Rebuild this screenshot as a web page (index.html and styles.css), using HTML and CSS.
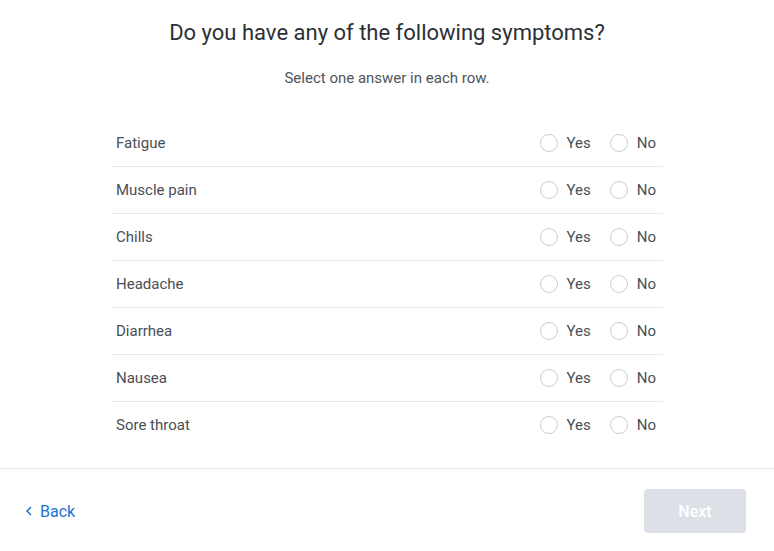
FILE: index.html
```html
<!DOCTYPE html>
<html lang="en">
<head>
    <meta charset="UTF-8">
    <meta name="viewport" content="width=device-width, initial-scale=1.0">
    <title>Symptoms</title>
    <link rel="stylesheet" href="styles.css">
</head>
<body>
    <main class="survey">
        <h1 class="title">Do you have any of the following symptoms?</h1>
        <p class="hint">Select one answer in each row.</p>

        <ul class="symptoms">
            <li class="row">
                <span class="label">Fatigue</span>
                <div class="choices">
                    <label class="choice"><input type="radio" name="fatigue"><span class="dot"></span>Yes</label>
                    <label class="choice"><input type="radio" name="fatigue"><span class="dot"></span>No</label>
                </div>
            </li>
            <li class="row">
                <span class="label">Muscle pain</span>
                <div class="choices">
                    <label class="choice"><input type="radio" name="muscle"><span class="dot"></span>Yes</label>
                    <label class="choice"><input type="radio" name="muscle"><span class="dot"></span>No</label>
                </div>
            </li>
            <li class="row">
                <span class="label">Chills</span>
                <div class="choices">
                    <label class="choice"><input type="radio" name="chills"><span class="dot"></span>Yes</label>
                    <label class="choice"><input type="radio" name="chills"><span class="dot"></span>No</label>
                </div>
            </li>
            <li class="row">
                <span class="label">Headache</span>
                <div class="choices">
                    <label class="choice"><input type="radio" name="headache"><span class="dot"></span>Yes</label>
                    <label class="choice"><input type="radio" name="headache"><span class="dot"></span>No</label>
                </div>
            </li>
            <li class="row">
                <span class="label">Diarrhea</span>
                <div class="choices">
                    <label class="choice"><input type="radio" name="diarrhea"><span class="dot"></span>Yes</label>
                    <label class="choice"><input type="radio" name="diarrhea"><span class="dot"></span>No</label>
                </div>
            </li>
            <li class="row">
                <span class="label">Nausea</span>
                <div class="choices">
                    <label class="choice"><input type="radio" name="nausea"><span class="dot"></span>Yes</label>
                    <label class="choice"><input type="radio" name="nausea"><span class="dot"></span>No</label>
                </div>
            </li>
            <li class="row">
                <span class="label">Sore throat</span>
                <div class="choices">
                    <label class="choice"><input type="radio" name="throat"><span class="dot"></span>Yes</label>
                    <label class="choice"><input type="radio" name="throat"><span class="dot"></span>No</label>
                </div>
            </li>
        </ul>
    </main>

    <footer class="actions">
        <a class="back" href="#">
            <svg width="8" height="10" viewBox="0 0 8 10"><path d="M6 1 2 5l4 4" fill="none" stroke="currentColor" stroke-width="1.5"/></svg>
            Back
        </a>
        <button class="next" disabled>Next</button>
    </footer>
</body>
</html>
```

FILE: styles.css
```css
body {
    font-family: Roboto, "Liberation Sans", sans-serif;
    margin: 0;
    padding: 0;
    background-color: #fff;
    color: #4a4f54;
}

.survey {
    width: 552px;
    margin: 0 auto;
    padding-top: 20px;
    padding-bottom: 20px;
}

.title {
    margin: 0;
    font-size: 22px;
    font-weight: 400;
    line-height: 26px;
    text-align: center;
    color: #2b3034;
}

.hint {
    margin: 24px 0 0;
    font-size: 15px;
    line-height: 16px;
    text-align: center;
    color: #505559;
}

.symptoms {
    list-style: none;
    margin: 34px 0 0;
    padding: 0;
}

.row {
    display: flex;
    align-items: center;
    justify-content: space-between;
    height: 46px;
    padding: 0 7px 0 5px;
    border-bottom: 1px solid #e8e9eb;
    font-size: 15px;
}

.row:last-child {
    border-bottom: none;
}

.choices {
    display: flex;
    gap: 19px;
}

.choice {
    display: flex;
    align-items: center;
    gap: 9px;
    cursor: pointer;
}

.choice input {
    display: none;
}

.dot {
    width: 16px;
    height: 16px;
    border: 1px solid #c9ccd0;
    border-radius: 50%;
}

.choice input:checked + .dot {
    border: 5px solid #1b75d0;
    width: 8px;
    height: 8px;
}

.actions {
    display: flex;
    align-items: center;
    justify-content: space-between;
    border-top: 1px solid #e6e7e9;
    padding: 20px 28px 18px 25px;
}

.back {
    display: flex;
    align-items: center;
    gap: 7px;
    color: #1a73d1;
    text-decoration: none;
    font-size: 16px;
}

.next {
    width: 102px;
    height: 44px;
    border: none;
    border-radius: 4px;
    background-color: #dde1e7;
    color: #fff;
    font-family: inherit;
    font-size: 16px;
    font-weight: 500;
}
```
